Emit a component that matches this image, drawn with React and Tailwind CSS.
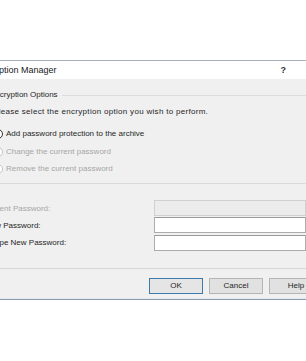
export default function App() {
  const radio = (checked, disabled) => (
    <span
      className={
        "shrink-0 w-[10px] h-[10px] rounded-full border bg-white flex items-center justify-center " +
        (disabled ? "border-[#c4c4c4]" : "border-[#333333]")
      }
    >
      {checked ? <span className="w-[4px] h-[4px] rounded-full bg-[#222222]" /> : null}
    </span>
  );
  return (
    <div className="w-[306px] h-[361px] bg-white overflow-hidden font-['Liberation_Sans',Arial,sans-serif] text-[8px] text-[#262626] leading-none">
      <div className="h-[60px]" />
      <div className="border-t border-[#a3b0c0]">
        <div className="h-[18px] bg-white flex items-center">
          <span className="ml-[-24px] text-[9px] whitespace-nowrap text-[#1a1a1a]">Encryption Manager</span>
          <span className="ml-auto mr-[20px] text-[9px] font-bold text-[#333333]">?</span>
        </div>
        <div className="bg-[#f0f0f0] h-[220px] flex flex-col">
          <div className="mt-[9px] h-[14px] flex items-center">
            <span className="ml-[-10px] whitespace-nowrap">Encryption Options</span>
            <span className="ml-[4px] flex-1 h-px bg-[#dcdcdc]" />
          </div>
          <div className="mt-[3px] h-[14px] flex items-center">
            <span className="ml-[-7px] whitespace-nowrap tracking-[0.3px]">Please select the encryption option you wish to perform.</span>
          </div>
          <div className="mt-[8px] h-[14px] flex items-center ml-[-7px] gap-[3px]">
            {radio(true, false)}
            <span className="whitespace-nowrap">Add password protection to the archive</span>
          </div>
          <div className="mt-[4px] h-[14px] flex items-center ml-[-7px] gap-[3px] text-[#a6a6a6]">
            {radio(false, true)}
            <span className="whitespace-nowrap">Change the current password</span>
          </div>
          <div className="mt-[3px] h-[14px] flex items-center ml-[-7px] gap-[3px] text-[#a6a6a6]">
            {radio(false, true)}
            <span className="whitespace-nowrap">Remove the current password</span>
          </div>
          <div className="mt-[7px] h-px bg-[#dadada]" />
          <div className="mt-[16px] h-[16px] flex items-center">
            <span className="ml-[-16px] mt-[1px] whitespace-nowrap text-[#a6a6a6]">Current Password:</span>
            <div className="ml-auto w-[152px] h-[16px] border border-[#d0d0d0] bg-[#ececec]" />
          </div>
          <div className="mt-[1px] h-[16px] flex items-center">
            <span className="ml-[-15px] mt-[1px] whitespace-nowrap">New Password:</span>
            <div className="ml-auto w-[152px] h-[16px] border border-[#acacac] border-t-[#9a9a9a] bg-white" />
          </div>
          <div className="mt-[2px] h-[16px] flex items-center">
            <span className="ml-[-17px] whitespace-nowrap">Retype New Password:</span>
            <div className="ml-auto w-[152px] h-[16px] border border-[#acacac] border-t-[#9a9a9a] bg-white" />
          </div>
          <div className="mt-[17px] h-px bg-[#d6d6d6]" />
          <div className="mt-[9px] h-[16px] flex gap-[6px] pl-[149px]">
            <div className="shrink-0 w-[54px] h-[16px] border border-[#3d7bad] bg-[#e5e5e5] flex items-center justify-center">OK</div>
            <div className="shrink-0 w-[54px] h-[16px] border border-[#b5b5b5] bg-[#e1e1e1] flex items-center justify-center">Cancel</div>
            <div className="shrink-0 w-[54px] h-[16px] border border-[#b5b5b5] bg-[#e1e1e1] flex items-center justify-center">Help</div>
          </div>
          <div className="mt-auto h-px bg-[#e2e9f1]" />
        </div>
        <div className="h-px bg-[#8d9bb0]" />
      </div>
    </div>
  );
}
